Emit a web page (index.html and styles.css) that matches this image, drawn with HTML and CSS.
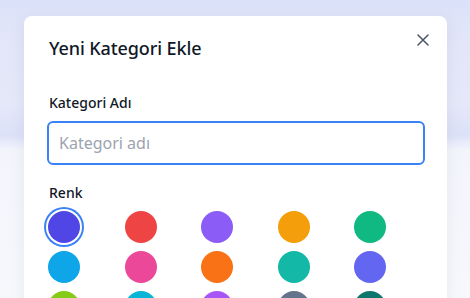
FILE: index.html
```html
<!DOCTYPE html>
<html lang="tr">
<head>
    <meta charset="UTF-8">
    <meta name="viewport" content="width=device-width, initial-scale=1.0">
    <title>Yeni Kategori Ekle</title>
    <link rel="stylesheet" href="styles.css">
</head>
<body>
    <div class="modal">
        <div class="modal-head">
            <h2>Yeni Kategori Ekle</h2>
            <button class="close" aria-label="Kapat">
                <svg width="12" height="12" viewBox="0 0 12 12">
                    <path d="M1 1 L11 11 M11 1 L1 11" stroke="#4b5563" stroke-width="1.5" stroke-linecap="round"/>
                </svg>
            </button>
        </div>

        <div class="field">
            <label for="name">Kategori Adı</label>
            <input type="text" id="name" placeholder="Kategori adı">
        </div>

        <div class="field">
            <label>Renk</label>
            <div class="colors">
                <button class="dot selected" style="background:#4f46e5"></button>
                <button class="dot" style="background:#ef4444"></button>
                <button class="dot" style="background:#8b5cf6"></button>
                <button class="dot" style="background:#f59e0b"></button>
                <button class="dot" style="background:#10b981"></button>
                <button class="dot" style="background:#0ea5e9"></button>
                <button class="dot" style="background:#ec4899"></button>
                <button class="dot" style="background:#f97316"></button>
                <button class="dot" style="background:#14b8a6"></button>
                <button class="dot" style="background:#6366f1"></button>
                <button class="dot" style="background:#84cc16"></button>
                <button class="dot" style="background:#06b6d4"></button>
                <button class="dot" style="background:#a855f7"></button>
                <button class="dot" style="background:#64748b"></button>
                <button class="dot" style="background:#0f766e"></button>
            </div>
        </div>
    </div>
</body>
</html>
```

FILE: styles.css
```css
body {
    margin: 0;
    height: 298px;
    overflow: hidden;
    font-family: "Noto Sans", "Open Sans", sans-serif;
    background: linear-gradient(to bottom,
        #dbe1f9 0,
        #e2e6f8 40px,
        #e5e8f8 105px,
        #dce1f8 135px,
        #f3f5fb 150px,
        #f7f8fc 100%);
}

.modal {
    background-color: white;
    margin: 16px 23px 0 24px;
    padding: 0 22px 40px 23px;
    border-radius: 8px;
    box-shadow: 0 4px 16px rgba(60, 70, 120, 0.08);
    min-height: 320px;
}

.modal-head {
    display: flex;
    justify-content: space-between;
    align-items: flex-start;
    padding-top: 18px;
    margin-bottom: 31px;
}

.modal-head h2 {
    margin: 0;
    font-size: 18px;
    font-weight: 500;
    line-height: 28px;
    color: #111827;
    padding-left: 2px;
    letter-spacing: -0.1px;
}

.close {
    background: none;
    border: none;
    padding: 0;
    margin: -2px -6px 0 0;
    width: 16px;
    height: 16px;
    display: flex;
    align-items: center;
    justify-content: center;
    cursor: pointer;
}

.field {
    margin-bottom: 18px;
}

.field label {
    display: block;
    font-size: 14px;
    font-weight: 500;
    line-height: 20px;
    color: #111827;
    margin-bottom: 8px;
    padding-left: 2px;
}

.field input {
    width: 100%;
    height: 44px;
    box-sizing: border-box;
    border: 2px solid #3b82f6;
    border-radius: 6px;
    padding: 0 10px;
    font-family: inherit;
    font-size: 16px;
    color: #111827;
    outline: none;
}

.field input::placeholder {
    color: #9ca3af;
}

.colors {
    display: grid;
    grid-template-columns: repeat(5, 32px);
    column-gap: 44.5px;
    row-gap: 8px;
    padding: 0 0 0 1px;
    margin-top: 1px;
}

.dot {
    width: 32px;
    height: 32px;
    border-radius: 50%;
    border: none;
    padding: 0;
    cursor: pointer;
}

.dot.selected {
    box-shadow: 0 0 0 2px white, 0 0 0 4px #3b82f6;
}
```
